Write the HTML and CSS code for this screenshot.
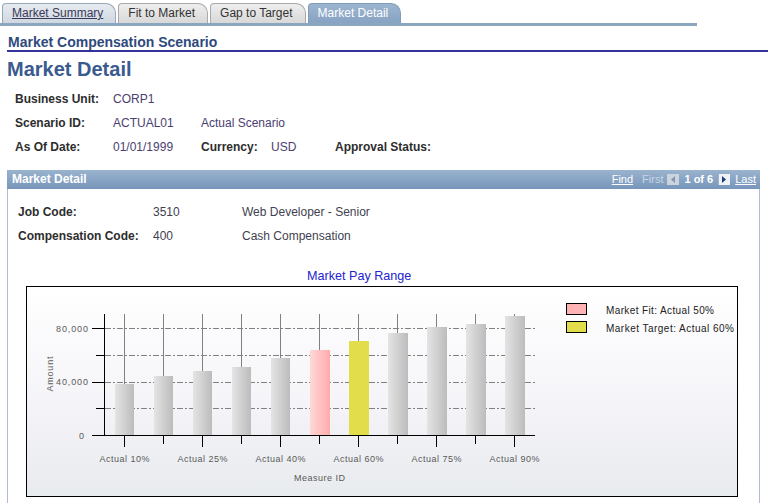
FILE: index.html
```html
<!DOCTYPE html>
<html lang="en">
<head>
<meta charset="utf-8">
<title>Market Detail</title>
<link rel="stylesheet" href="styles.css">
</head>
<body>
<div class="tabs">
  <a class="tab tab-link" href="#">Market Summary</a>
  <span class="tab">Fit to Market</span>
  <span class="tab">Gap to Target</span>
  <span class="tab tab-active">Market Detail</span>
</div>
<h2 class="page-sub">Market Compensation Scenario</h2>
<h1 class="page-title">Market Detail</h1>
<div class="fields">
  <span class="lbl">Business Unit:</span><span class="val span-rest">CORP1</span>
  <span class="lbl">Scenario ID:</span><span class="val">ACTUAL01</span><span class="val span-rest2">Actual Scenario</span>
  <span class="lbl">As Of Date:</span><span class="val">01/01/1999</span><span class="lbl">Currency:</span><span class="val">USD</span><span class="lbl">Approval Status:</span>
</div>

<section class="panel">
  <div class="panel-head">
    <span class="panel-title">Market Detail</span>
    <div class="nav">
      <a class="nav-link nav-find" href="#">Find</a>
      <span class="nav-dim">First</span>
      <svg class="nav-btn nav-prev" width="12" height="11" viewBox="0 0 12 11"><rect x="0" y="0" width="12" height="11" fill="#c9d4df"/><path d="M8 2 L4 5.5 L8 9 Z" fill="#8596ab"/></svg>
      <b class="nav-count">1 of 6</b>
      <svg class="nav-btn nav-next" width="12" height="11" viewBox="0 0 12 11"><rect x="0" y="0" width="12" height="11" fill="#eef2f7"/><rect x="0" y="0" width="1" height="11" fill="#9fb2c9"/><path d="M4 2 L8 5.5 L4 9 Z" fill="#1d3c78"/></svg>
      <a class="nav-link nav-last" href="#">Last</a>
    </div>
  </div>
  <div class="panel-body">
    <div class="job-grid">
      <span class="lbl">Job Code:</span><span class="val">3510</span><span class="val">Web Developer - Senior</span>
      <span class="lbl">Compensation Code:</span><span class="val">400</span><span class="val">Cash Compensation</span>
    </div>
    <div class="chart-title">Market Pay Range</div>
    <div class="chart">
      <svg width="710" height="209" viewBox="0 0 710 209" font-family="Liberation Sans, Arial, sans-serif">
        <defs>
          <linearGradient id="bg" x1="0" y1="0" x2="0" y2="1">
            <stop offset="0" stop-color="#ffffff"/>
            <stop offset="0.55" stop-color="#f5f4f8"/>
            <stop offset="1" stop-color="#e8ebee"/>
          </linearGradient>
          <linearGradient id="gb" x1="0" y1="0" x2="1" y2="0">
            <stop offset="0" stop-color="#e4e4e4"/>
            <stop offset="1" stop-color="#bcbcbc"/>
          </linearGradient>
          <linearGradient id="pk" x1="0" y1="0" x2="1" y2="0">
            <stop offset="0" stop-color="#ffd8d8"/>
            <stop offset="1" stop-color="#ffabab"/>
          </linearGradient>
        </defs>
        <rect width="710" height="209" fill="url(#bg)"/>
        <g stroke="#808080" stroke-width="1" stroke-dasharray="6 2 2 2">
          <line x1="78" y1="41.5" x2="508" y2="41.5"/>
          <line x1="78" y1="68.5" x2="508" y2="68.5"/>
          <line x1="78" y1="95.5" x2="508" y2="95.5"/>
          <line x1="78" y1="121.5" x2="508" y2="121.5"/>
        </g>
        <g stroke="#808080" stroke-width="1">
          <line x1="97.5" y1="27" x2="97.5" y2="97"/>
          <line x1="136.5" y1="27" x2="136.5" y2="89"/>
          <line x1="175.5" y1="27" x2="175.5" y2="84"/>
          <line x1="214.5" y1="27" x2="214.5" y2="80"/>
          <line x1="253.5" y1="27" x2="253.5" y2="71"/>
          <line x1="292.5" y1="27" x2="292.5" y2="63"/>
          <line x1="331.5" y1="27" x2="331.5" y2="54"/>
          <line x1="370.5" y1="27" x2="370.5" y2="46"/>
          <line x1="409.5" y1="27" x2="409.5" y2="40"/>
          <line x1="448.5" y1="27" x2="448.5" y2="37"/>
          <line x1="487.5" y1="27" x2="487.5" y2="29"/>
        </g>
        <rect x="88" y="97" width="19" height="51" fill="url(#gb)"/>
        <rect x="127" y="89" width="19" height="59" fill="url(#gb)"/>
        <rect x="166" y="84" width="19" height="64" fill="url(#gb)"/>
        <rect x="205" y="80" width="19" height="68" fill="url(#gb)"/>
        <rect x="244" y="71" width="19" height="77" fill="url(#gb)"/>
        <rect x="283" y="63" width="20" height="85" fill="url(#pk)"/>
        <rect x="322" y="54" width="20" height="94" fill="#e2dd4b"/>
        <rect x="361" y="46" width="20" height="102" fill="url(#gb)"/>
        <rect x="400" y="40" width="20" height="108" fill="url(#gb)"/>
        <rect x="439" y="37" width="20" height="111" fill="url(#gb)"/>
        <rect x="478" y="29" width="20" height="119" fill="url(#gb)"/>
        <g stroke="#000" stroke-width="1">
          <line x1="77.5" y1="27" x2="77.5" y2="149"/>
          <line x1="77" y1="148.5" x2="508" y2="148.5"/>
          <line x1="65" y1="41.5" x2="78" y2="41.5"/>
          <line x1="69" y1="68.5" x2="78" y2="68.5"/>
          <line x1="65" y1="95.5" x2="78" y2="95.5"/>
          <line x1="69" y1="121.5" x2="78" y2="121.5"/>
          <line x1="65" y1="148.5" x2="78" y2="148.5"/>
          <line x1="97.5" y1="149" x2="97.5" y2="160"/>
          <line x1="136.5" y1="149" x2="136.5" y2="157"/>
          <line x1="175.5" y1="149" x2="175.5" y2="160"/>
          <line x1="214.5" y1="149" x2="214.5" y2="157"/>
          <line x1="253.5" y1="149" x2="253.5" y2="160"/>
          <line x1="292.5" y1="149" x2="292.5" y2="157"/>
          <line x1="331.5" y1="149" x2="331.5" y2="160"/>
          <line x1="370.5" y1="149" x2="370.5" y2="157"/>
          <line x1="409.5" y1="149" x2="409.5" y2="160"/>
          <line x1="448.5" y1="149" x2="448.5" y2="157"/>
          <line x1="487.5" y1="149" x2="487.5" y2="160"/>
        </g>
        <g fill="#5a5a5a" font-size="9">
          <text x="61" y="45" text-anchor="end" textLength="32">80,000</text>
          <text x="61" y="98" text-anchor="end" textLength="32">40,000</text>
          <text x="57" y="152" text-anchor="end">0</text>
          <text transform="translate(26,87) rotate(-90)" text-anchor="middle" textLength="35">Amount</text>
          <text x="97.5" y="175" text-anchor="middle" textLength="50">Actual 10%</text>
          <text x="175.5" y="175" text-anchor="middle" textLength="50">Actual 25%</text>
          <text x="253.5" y="175" text-anchor="middle" textLength="50">Actual 40%</text>
          <text x="331.5" y="175" text-anchor="middle" textLength="50">Actual 60%</text>
          <text x="409.5" y="175" text-anchor="middle" textLength="50">Actual 75%</text>
          <text x="487.5" y="175" text-anchor="middle" textLength="50">Actual 90%</text>
          <text x="292.5" y="194" text-anchor="middle" textLength="51">Measure ID</text>
        </g>
        <rect x="539.5" y="16.5" width="20" height="11" fill="#ffb3b3" stroke="#000"/>
        <rect x="539.5" y="34.5" width="20" height="11" fill="#e2dd4b" stroke="#000"/>
        <g fill="#222" font-size="10">
          <text x="579" y="26.5" textLength="108">Market Fit: Actual 50%</text>
          <text x="579" y="44.5" textLength="128">Market Target: Actual 60%</text>
        </g>
      </svg>
    </div>
  </div>
</section>
</body>
</html>
```

FILE: styles.css
```css
* {
  box-sizing: border-box;
  margin: 0;
  padding: 0;
}

html, body {
  background: #ffffff;
}

body {
  font-family: "Liberation Sans", Arial, sans-serif;
  font-size: 12px;
  color: #333333;
  padding-top: 3px;
  width: 768px;
  height: 503px;
  overflow: hidden;
}

/* ---------- tabs ---------- */
.tabs {
  display: flex;
  align-items: flex-end;
  width: 697px;
  height: 23px;
  padding-left: 2px;
  border-bottom: 3px solid #8da6bf;
}

.tab {
  display: block;
  height: 20px;
  line-height: 19px;
  padding: 0 12px 0 9px;
  margin-right: 2px;
  border: 1px solid #a9a9a9;
  border-bottom: none;
  border-radius: 4px 10px 0 0;
  background: linear-gradient(#eeeeee, #d8d8d8);
  color: #333333;
  text-decoration: none;
  white-space: nowrap;
}

.tab-link {
  background: linear-gradient(#e6ebf0, #cfd7e0);
  border-color: #99a6b4;
  color: #3a3a58;
  text-decoration: underline;
}

.tab-active {
  background: linear-gradient(#9cb5d0, #87a3c3);
  border-color: #809bbb;
  color: #ffffff;
}

/* ---------- headings ---------- */
.page-sub {
  margin: 8px 0 0 7px;
  padding-left: 1px;
  font-size: 14px;
  line-height: 16px;
  font-weight: bold;
  color: #2e4a7d;
  border-bottom: 2px solid #333399;
}

.page-title {
  margin: 5px 0 0 7px;
  font-size: 20px;
  line-height: 24px;
  font-weight: bold;
  color: #3b5b8e;
}

/* ---------- fields ---------- */
.fields {
  display: grid;
  grid-template-columns: 98px 88px 70px 64px auto;
  grid-auto-rows: 24px;
  line-height: 24px;
  margin-top: 6px;
  padding-left: 15px;
}

.lbl {
  font-weight: bold;
  color: #2d2d2d;
  white-space: nowrap;
}

.val {
  color: #4b3e70;
  white-space: nowrap;
}

.span-rest {
  grid-column: 2 / 6;
}

.span-rest2 {
  grid-column: 3 / 6;
}

/* ---------- panel ---------- */
.panel {
  margin: 11px 0 0 7px;
  width: 753px;
  border: 1px solid #aebdd2;
  border-top: none;
}

.panel-head {
  display: flex;
  align-items: center;
  height: 19px;
  line-height: 19px;
  margin: 0 -1px;
  padding: 0 4px 0 5px;
  background: linear-gradient(#9ab3ce, #7796bb);
  color: #ffffff;
}

.panel-title {
  font-weight: bold;
}

.nav {
  margin-left: auto;
  display: flex;
  align-items: center;
  font-size: 11px;
}

.nav-link {
  color: #ffffff;
  text-decoration: underline;
}

.nav-dim {
  color: #c9d5e2;
  margin-left: 9px;
}

.nav-btn {
  display: block;
}

.nav-prev {
  margin-left: 4px;
}

.nav-count {
  margin-left: 5px;
  color: #ffffff;
}

.nav-next {
  margin-left: 5px;
}

.nav-last {
  margin-left: 5px;
}

.panel-body {
  padding: 11px 0 30px 10px;
}

.job-grid {
  display: grid;
  grid-template-columns: 135px 89px auto;
  grid-auto-rows: 24px;
  line-height: 24px;
}

.job-grid .val {
  color: #3f3f4f;
}

.chart-title {
  margin-top: 20px;
  padding-left: 289px;
  font-size: 12.6px;
  line-height: 16px;
  color: #2323cf;
}

.chart {
  margin: 2px 0 0 8px;
  width: 712px;
  height: 211px;
  border: 1px solid #000000;
}

.chart svg {
  display: block;
}
```
